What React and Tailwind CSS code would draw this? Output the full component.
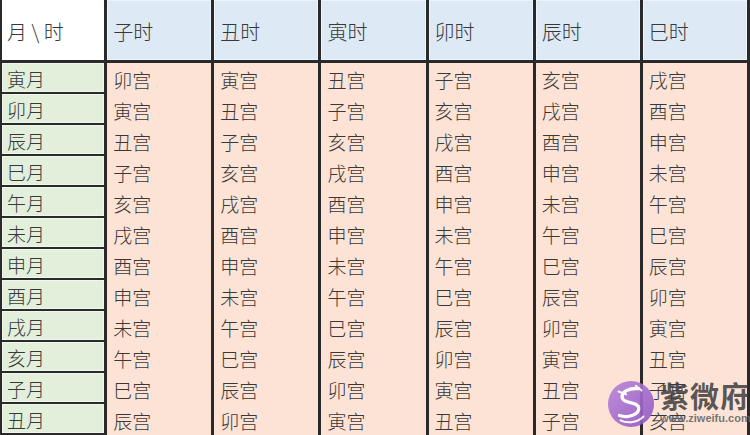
import React from "react";

const hours = ["子时", "丑时", "寅时", "卯时", "辰时", "巳时"];
const months = ["寅月", "卯月", "辰月", "巳月", "午月", "未月", "申月", "酉月", "戌月", "亥月", "子月", "丑月"];
const branches = ["子", "丑", "寅", "卯", "辰", "巳", "午", "未", "申", "酉", "戌", "亥"];

function palace(row, col) {
  const idx = (((3 - row - col) % 12) + 12) % 12;
  return branches[idx] + "宫";
}

const font = { fontFamily: '"Noto Sans CJK SC", "Noto Sans", sans-serif' };

function Logo() {
  return (
    <div className="absolute left-[607px] top-[380px] flex items-end gap-[5px] pointer-events-none">
      <svg width="48" height="48" viewBox="0 0 50 50" className="opacity-90">
        <defs>
          <linearGradient id="lg" x1="0" y1="0" x2="1" y2="1">
            <stop offset="0" stopColor="#b985d9" />
            <stop offset="1" stopColor="#8e55c4" />
          </linearGradient>
        </defs>
        <circle cx="25" cy="25" r="24" fill="url(#lg)" />
        <path
          d="M33 9 C24 8 14 12 16 19 C18 25 32 22 33 29 C34 36 22 40 13 37"
          fill="none"
          stroke="#fff"
          strokeWidth="3.5"
          strokeLinecap="round"
        />
        <path d="M12 12 L20 15 M30 6 L36 11" stroke="#fff" strokeWidth="2" strokeLinecap="round" />
        <path d="M14 42 C22 46 32 44 38 38" fill="none" stroke="#fff" strokeWidth="2" strokeLinecap="round" />
      </svg>
      <div className="flex flex-col leading-none mb-[3px]">
        <span className="text-[29px] leading-[30px] font-bold text-[#3d3d3d]/85 tracking-[1px]" style={font}>
          紫微府
        </span>
        <span
          className="text-[11px] leading-[13px] font-bold text-[#666]/90 mt-[2px]"
          style={{ fontFamily: '"Liberation Sans", Arial, sans-serif' }}
        >
          www.ziweifu.com
        </span>
      </div>
    </div>
  );
}

export default function App() {
  return (
    <div className="relative w-[750px] h-[435px] overflow-hidden bg-white text-[#383838] font-light" style={font}>
      <div className="grid grid-cols-7 h-[63px]">
        <div className="bg-white border-l-2 border-r-[3px] border-b-[3px] border-[#2a2a2a] flex items-center pl-[5px] pt-[3px] text-[20px] leading-[24px]">
          月 \ 时
        </div>
        {hours.map((h) => (
          <div
            key={h}
            className="bg-[#dde9f5] border-r-[3px] border-b-[3px] border-[#2a2a2a] flex items-center pl-[6px] pt-[3px] text-[20px] leading-[24px] shadow-[inset_0_0_0_1px_#eef4fb]"
          >
            {h}
          </div>
        ))}
      </div>
      {months.map((m, r) => (
        <div key={m} className="grid grid-cols-7 h-[31px] overflow-hidden">
          <div className="h-[31px] bg-[#e2efda] border-l-2 border-r-[3px] border-b-[2px] border-[#2a2a2a] flex items-center pl-[5px] pt-[2px] text-[19px] leading-[22px] shadow-[inset_0_0_0_1px_#f1f7ed]">
            {m}
          </div>
          {hours.map((h, c) => (
            <div
              key={h}
              className="h-[31px] bg-[#fde3d5] border-r-[3px] border-[#2a2a2a] flex items-center pl-[6px] pt-[3px] text-[19px] leading-[22px]"
            >
              {palace(r, c)}
            </div>
          ))}
        </div>
      ))}
      <Logo />
    </div>
  );
}
